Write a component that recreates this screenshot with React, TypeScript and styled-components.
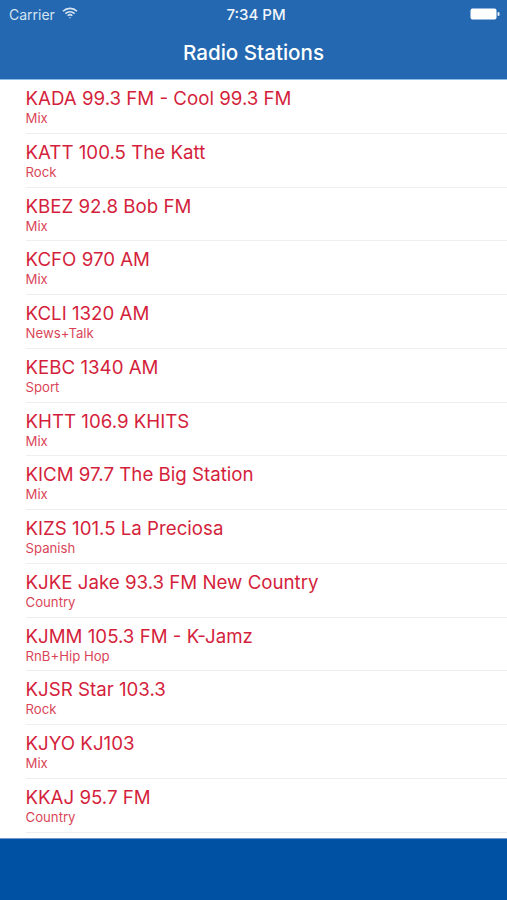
import { createGlobalStyle } from "styled-components";
import styled from "styled-components";

const GlobalStyle = createGlobalStyle`
  html, body {
    margin: 0;
    padding: 0;
    background: #fff;
  }
  body {
    font-family: "Inter", "Liberation Sans", sans-serif;
  }
`;

const Screen = styled.div`
  width: 507px;
  height: 900px;
  display: flex;
  flex-direction: column;
  overflow: hidden;
`;

const Header = styled.header`
  height: 80px;
  box-sizing: border-box;
  background: #2368b0;
  border-bottom: 1px solid #8dbce8;
  color: #fff;
  flex: none;
`;

const StatusBar = styled.div`
  height: 28px;
  padding: 0 7px 0 9px;
  display: grid;
  grid-template-columns: 1fr auto 1fr;
  align-items: center;
  font-size: 14px;
`;

const Carrier = styled.div`
  display: flex;
  align-items: center;
  gap: 7px;
  color: #d5e3f2;

  svg {
    margin-bottom: 3px;
  }
`;

const Time = styled.div`
  margin-left: 3px;
  font-size: 15px;
  font-weight: 500;
  color: #f1f6fb;
`;

const BatteryWrap = styled.div`
  display: flex;
  justify-content: flex-end;
`;

const Title = styled.h1`
  margin: 0;
  height: 49px;
  line-height: 49px;
  text-align: center;
  font-size: 20.6px;
  font-weight: 500;
`;

const List = styled.div`
  flex: 1;
  min-height: 0;
  padding-left: 26px;
  background: #fff;
`;

const Row = styled.div`
  height: 53.77px;
  box-sizing: border-box;
  border-bottom: 1px solid #eeeeee;
  display: flex;
  flex-direction: column;
  padding-top: 7px;
  color: #d41f3c;
`;

const Name = styled.div`
  font-size: 18.7px;
  line-height: 23px;
  margin-left: -0.5px;
`;

const Genre = styled.div`
  font-size: 13.2px;
  line-height: 16px;
  margin-left: -0.5px;
  opacity: 0.85;
`;

const Footer = styled.footer`
  height: 62px;
  box-sizing: border-box;
  background: #0050a3;
  border-top: 1px solid #6b98cf;
  flex: none;
`;

const stations = [
  ["KADA 99.3 FM - Cool 99.3 FM", "Mix"],
  ["KATT 100.5 The Katt", "Rock"],
  ["KBEZ 92.8 Bob FM", "Mix"],
  ["KCFO 970 AM", "Mix"],
  ["KCLI 1320 AM", "News+Talk"],
  ["KEBC 1340 AM", "Sport"],
  ["KHTT 106.9 KHITS", "Mix"],
  ["KICM 97.7 The Big Station", "Mix"],
  ["KIZS 101.5 La Preciosa", "Spanish"],
  ["KJKE Jake 93.3 FM New Country", "Country"],
  ["KJMM 105.3 FM - K-Jamz", "RnB+Hip Hop"],
  ["KJSR Star 103.3", "Rock"],
  ["KJYO KJ103", "Mix"],
  ["KKAJ 95.7 FM", "Country"],
];

function WifiIcon() {
  return (
    <svg width="16" height="12" viewBox="0 0 16 12" fill="none" stroke="#d5e3f2" strokeWidth="1.6">
      <path d="M1 4.2a10 10 0 0 1 14 0" />
      <path d="M3.4 6.6a6.6 6.6 0 0 1 9.2 0" />
      <path d="M5.7 8.8a3.3 3.3 0 0 1 4.6 0" />
      <circle cx="8" cy="10.7" r="0.7" fill="#d5e3f2" stroke="none" />
    </svg>
  );
}

function BatteryIcon() {
  return (
    <svg width="30" height="12" viewBox="0 0 30 12">
      <rect x="0.5" y="0.5" width="26" height="11" rx="2" fill="#fff" />
      <rect x="27.5" y="4" width="2" height="4" rx="1" fill="#e4edf7" />
    </svg>
  );
}

export default function App() {
  return (
    <Screen>
      <GlobalStyle />
      <Header>
        <StatusBar>
          <Carrier>
            Carrier
            <WifiIcon />
          </Carrier>
          <Time>7:34 PM</Time>
          <BatteryWrap>
            <BatteryIcon />
          </BatteryWrap>
        </StatusBar>
        <Title>Radio Stations</Title>
      </Header>
      <List>
        {stations.map(([name, genre]) => (
          <Row key={name}>
            <Name>{name}</Name>
            <Genre>{genre}</Genre>
          </Row>
        ))}
      </List>
      <Footer />
    </Screen>
  );
}
